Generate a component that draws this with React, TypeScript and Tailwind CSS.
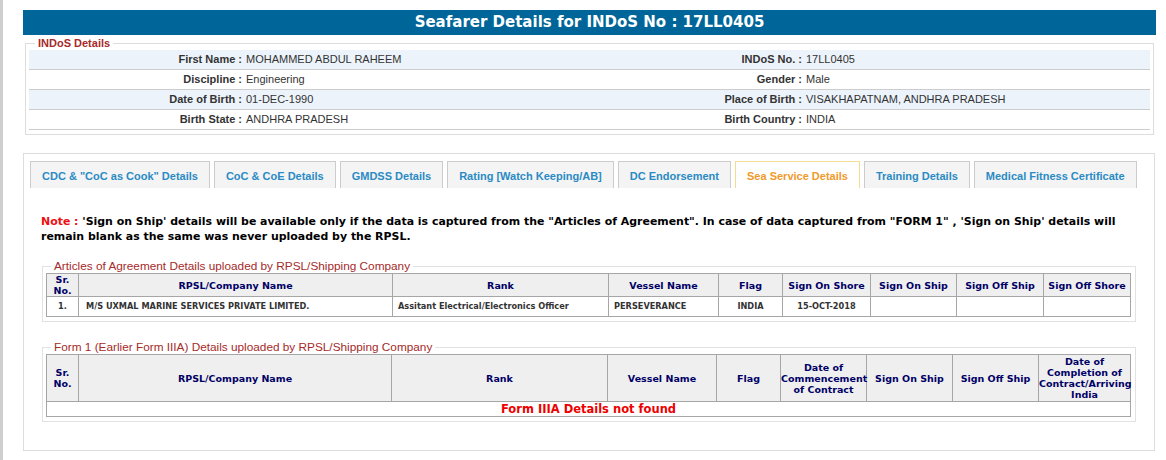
const details = [
  { l1: 'First Name :', v1: 'MOHAMMED ABDUL RAHEEM', l2: 'INDoS No. :', v2: '17LL0405' },
  { l1: 'Discipline :', v1: 'Engineering', l2: 'Gender :', v2: 'Male' },
  { l1: 'Date of Birth :', v1: '01-DEC-1990', l2: 'Place of Birth :', v2: 'VISAKHAPATNAM, ANDHRA PRADESH' },
  { l1: 'Birth State :', v1: 'ANDHRA PRADESH', l2: 'Birth Country :', v2: 'INDIA' },
];

const tabs = [
  'CDC & "CoC as Cook" Details',
  'CoC & CoE Details',
  'GMDSS Details',
  'Rating [Watch Keeping/AB]',
  'DC Endorsement',
  'Sea Service Details',
  'Training Details',
  'Medical Fitness Certificate',
];

const aoaCols = [
  { w: 32, t: ['Sr.', 'No.'] },
  { w: 314, t: ['RPSL/Company Name'] },
  { w: 216, t: ['Rank'] },
  { w: 110, t: ['Vessel Name'] },
  { w: 64, t: ['Flag'] },
  { w: 88, t: ['Sign On Shore'] },
  { w: 86, t: ['Sign On Ship'] },
  { w: 87, t: ['Sign Off Ship'] },
  { w: 87, t: ['Sign Off Shore'] },
];

const formCols = [
  { w: 32, t: ['Sr.', 'No.'] },
  { w: 313, t: ['RPSL/Company Name'] },
  { w: 216, t: ['Rank'] },
  { w: 109, t: ['Vessel Name'] },
  { w: 64, t: ['Flag'] },
  { w: 86, t: ['Date of', 'Commencement', 'of Contract'] },
  { w: 86, t: ['Sign On Ship'] },
  { w: 86, t: ['Sign Off Ship'] },
  { w: 92, t: ['Date of', 'Completion of', 'Contract/Arriving', 'India'] },
];

function HeadRow({ cols, h }: { cols: { w: number; t: string[] }[]; h: string }) {
  return (
    <tr className={h}>
      {cols.map((c, i) => (
        <th
          key={i}
          className="border border-[#a6a6a6] bg-[#efefef] p-0 text-center align-middle text-[9.5px] font-bold leading-[11px] text-[#000066]"
        >
          {c.t.map((line, j) => (
            <div key={j}>{line}</div>
          ))}
        </th>
      ))}
    </tr>
  );
}

export default function App() {
  return (
    <div className="h-[460px] w-[1166px] overflow-hidden border-l-[3px] border-[#cfcfcf] bg-white pl-[20px] pt-[10px] font-['Liberation_Sans',Arial,sans-serif]">
      <div className="w-[1133px]">
        <div className="h-[25px] bg-[#006699] text-center font-['DejaVu_Sans',Verdana,sans-serif] text-[15px] font-bold leading-[25px] text-white">
          Seafarer Details for INDoS No : 17LL0405
        </div>

        <fieldset className="mx-[2px] mt-[2px] border border-[#dddddd] px-[3px] pb-[4px]">
          <legend className="ml-[6px] px-[3px] text-[11px] font-bold leading-[13px] text-[#a52a2a]">
            INDoS Details
          </legend>
          {details.map((r, i) => (
            <div
              key={i}
              className={`grid h-[20px] grid-cols-[213px_313px_247px_1fr] border-b border-[#cccccc] text-[11px] leading-[19px] text-[#333333] ${
                i % 2 === 0 ? 'bg-[#edf3fb]' : 'bg-white'
              }`}
            >
              <div className="text-right font-bold">{r.l1}</div>
              <div className="pl-[4px]">{r.v1}</div>
              <div className="text-right font-bold">{r.l2}</div>
              <div className="pl-[4px]">{r.v2}</div>
            </div>
          ))}
        </fieldset>

        <div className="mt-[18px] h-[298px] w-[1132px] border border-[#dddddd] px-[6px] pt-[7px]">
          <div className="flex gap-[4px]">
            {tabs.map((t) => {
              const active = t === 'Sea Service Details';
              return (
                <div
                  key={t}
                  className={`h-[27px] whitespace-nowrap border border-b-0 px-[11px] text-[11px] font-bold leading-[28px] ${
                    active
                      ? 'border-[#f2dc92] bg-white text-[#ef9a2c]'
                      : 'border-[#cccccc] bg-[#f4f4f4] text-[#2a8bc4]'
                  }`}
                >
                  {t}
                </div>
              );
            })}
          </div>

          <p className="ml-[11px] mt-[26px] whitespace-nowrap font-['DejaVu_Sans',Verdana,sans-serif] text-[10.95px] font-bold leading-[15px] text-black">
            <span className="text-[#ee1111]">Note : </span>
            'Sign on Ship' details will be available only if the data is captured from the "Articles of Agreement". In
            case of data captured from "FORM 1" , 'Sign on Ship' details will
            <br />
            remain blank as the same was never uploaded by the RPSL.
          </p>

          <fieldset className="mx-[12px] mt-[15px] border border-[#e2e2e2] px-[3px] pb-[4px]">
            <legend className="ml-[5px] px-[3px] text-[11.8px] leading-[14px] text-[#a52a2a]">
              Articles of Agreement Details uploaded by RPSL/Shipping Company
            </legend>
            <table className="w-[1085px] table-fixed border-collapse border border-[#999999] font-['DejaVu_Sans',Verdana,sans-serif]">
              <colgroup>
                {aoaCols.map((c, i) => (
                  <col key={i} style={{ width: c.w }} />
                ))}
              </colgroup>
              <thead>
                <HeadRow cols={aoaCols} h="h-[23px]" />
              </thead>
              <tbody>
                <tr className="h-[20px] text-[8.2px] font-bold text-[#333333]">
                  <td className="border border-[#a6a6a6] text-center">1.</td>
                  <td className="border border-[#a6a6a6] pl-[7px]">M/S UXMAL MARINE SERVICES PRIVATE LIMITED.</td>
                  <td className="border border-[#a6a6a6] pl-[5px]">Assitant Electrical/Electronics Officer</td>
                  <td className="border border-[#a6a6a6] pl-[5px]">PERSEVERANCE</td>
                  <td className="border border-[#a6a6a6] text-center">INDIA</td>
                  <td className="border border-[#a6a6a6] text-center">15-OCT-2018</td>
                  <td className="border border-[#a6a6a6]"></td>
                  <td className="border border-[#a6a6a6]"></td>
                  <td className="border border-[#a6a6a6]"></td>
                </tr>
              </tbody>
            </table>
          </fieldset>

          <fieldset className="mx-[12px] mt-[18px] border border-[#e2e2e2] px-[3px] pb-[4px]">
            <legend className="ml-[5px] px-[3px] text-[11.8px] leading-[14px] text-[#a52a2a]">
              Form 1 (Earlier Form IIIA) Details uploaded by RPSL/Shipping Company
            </legend>
            <table className="w-[1085px] table-fixed border-collapse border border-[#999999] font-['DejaVu_Sans',Verdana,sans-serif]">
              <colgroup>
                {formCols.map((c, i) => (
                  <col key={i} style={{ width: c.w }} />
                ))}
              </colgroup>
              <thead>
                <HeadRow cols={formCols} h="h-[47px]" />
              </thead>
              <tbody>
                <tr className="h-[15px]">
                  <td
                    colSpan={9}
                    className="border border-[#a6a6a6] text-center text-[11.5px] font-bold leading-[14px] text-[#ee0000]"
                  >
                    Form IIIA Details not found
                  </td>
                </tr>
              </tbody>
            </table>
          </fieldset>
        </div>
      </div>
    </div>
  );
}
